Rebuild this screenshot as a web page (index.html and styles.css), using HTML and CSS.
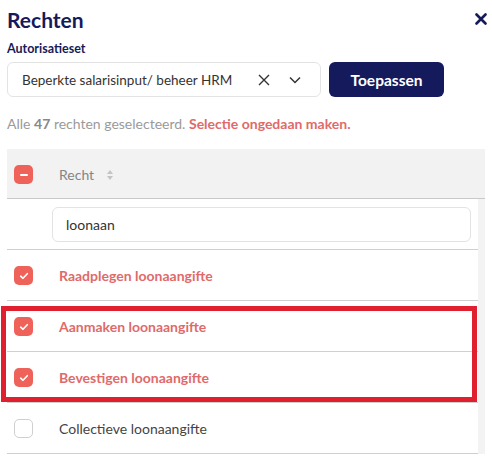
FILE: index.html
```html
<!DOCTYPE html>
<html lang="nl">
<head>
<meta charset="utf-8">
<title>Rechten</title>
<link rel="stylesheet" href="styles.css">
</head>
<body>
<div class="panel">
  <div class="topbar">
    <h1 class="title">Rechten</h1>
    <button class="close" aria-label="Sluiten">
      <svg width="12" height="12" viewBox="0 0 12 12"><path d="M1.5 1.5 L10.5 10.5 M10.5 1.5 L1.5 10.5" stroke="#151a5b" stroke-width="2.6" stroke-linecap="round"/></svg>
    </button>
  </div>
  <div class="label">Autorisatieset</div>
  <div class="selectrow">
    <div class="select">
      <span class="select-value">Beperkte salarisinput/ beheer HRM</span>
      <span class="select-icons">
        <svg width="12" height="12" viewBox="0 0 12 12"><path d="M1 1 L11 11 M11 1 L1 11" stroke="#333" stroke-width="1.4"/></svg>
        <svg width="12" height="12" viewBox="0 0 12 12"><path d="M1 3.5 L6 8.5 L11 3.5" stroke="#333" stroke-width="1.5" fill="none"/></svg>
      </span>
    </div>
    <button class="apply">Toepassen</button>
  </div>
  <p class="info">Alle <b class="count">47</b> rechten geselecteerd. <a class="undo">Selectie ongedaan maken.</a></p>

  <div class="table">
    <div class="thead">
      <span class="cb cb-on">
        <svg width="10" height="10" viewBox="0 0 10 10"><path d="M2 5 H8" stroke="#fff" stroke-width="2" stroke-linecap="round"/></svg>
      </span>
      <span class="th">Recht</span>
      <svg class="sort" width="8" height="12" viewBox="0 0 8 12"><path d="M4 1 L7 5 H1 Z M4 11 L7 7 H1 Z" fill="#c4c4c4"/></svg>
    </div>
    <div class="body">
      <div class="row filter">
        <input class="search" type="text" value="loonaan">
      </div>
      <div class="row">
        <span class="cb cb-on"><svg width="12" height="12" viewBox="0 0 12 12"><path d="M2.7 6.2 L5 8.3 L9.3 3.7" stroke="#fff" stroke-width="1.6" fill="none" stroke-linecap="round" stroke-linejoin="round"/></svg></span>
        <span class="name sel">Raadplegen loonaangifte</span>
      </div>
      <div class="row">
        <span class="cb cb-on"><svg width="12" height="12" viewBox="0 0 12 12"><path d="M2.7 6.2 L5 8.3 L9.3 3.7" stroke="#fff" stroke-width="1.6" fill="none" stroke-linecap="round" stroke-linejoin="round"/></svg></span>
        <span class="name sel">Aanmaken loonaangifte</span>
      </div>
      <div class="row">
        <span class="cb cb-on"><svg width="12" height="12" viewBox="0 0 12 12"><path d="M2.7 6.2 L5 8.3 L9.3 3.7" stroke="#fff" stroke-width="1.6" fill="none" stroke-linecap="round" stroke-linejoin="round"/></svg></span>
        <span class="name sel">Bevestigen loonaangifte</span>
      </div>
      <div class="row">
        <span class="cb cb-off"></span>
        <span class="name">Collectieve loonaangifte</span>
      </div>
    </div>
  </div>
  <div class="highlight"></div>
</div>
</body>
</html>
```
FILE: styles.css
```css
* { box-sizing: border-box; }
html, body { margin: 0; padding: 0; background: #fff; }
body {
  font-family: Lato, "Open Sans", "Liberation Sans", sans-serif;
  color: #333;
  width: 492px;
  height: 460px;
  overflow: hidden;
}
.panel {
  position: relative;
  padding: 0 7px;
}
.topbar {
  display: flex;
  justify-content: space-between;
  align-items: center;
  height: 38px;
}
.title {
  margin: 0;
  font-size: 21px;
  font-weight: 700;
  color: #151a5b;
}
.close {
  border: 0;
  background: none;
  padding: 0;
  margin-right: -2px;
  display: flex;
}
.label {
  font-size: 12.5px;
  font-weight: 700;
  color: #151a5b;
  margin-top: 3px;
  height: 21px;
}
.selectrow {
  display: flex;
  gap: 8px;
  height: 35px;
}
.select {
  width: 314px;
  border: 1px solid #e3e3e3;
  border-radius: 6px;
  display: flex;
  align-items: center;
  justify-content: space-between;
  padding: 0 19px 0 14px;
  font-size: 13.5px;
  color: #333;
}
.select-icons {
  display: flex;
  gap: 19px;
  align-items: center;
}
.apply {
  width: 115px;
  border: 0;
  border-radius: 6px;
  background: #141a5c;
  color: #fff;
  font-family: inherit;
  font-size: 15.5px;
  font-weight: 700;
}
.info {
  margin: 18px 0 0;
  height: 34px;
  font-size: 14px;
  color: #9a9a9a;
}
.count { color: #888; font-weight: 700; }
.undo { color: #e06a6a; font-weight: 700; }
.table {
  width: 478px;
}
.thead {
  background: #f2f2f2;
  height: 50px;
  border-bottom: 1px solid #c9c9c9;
  display: flex;
  align-items: center;
  padding-left: 7px;
  padding-top: 2px;
}
.body {
  border-right: 7px solid #f3f3f3;
}
.th {
  margin-left: 26px;
  font-size: 14px;
  color: #858585;
}
.sort { margin-left: 12px; }
.row {
  height: 51px;
  border-bottom: 1px solid #cfcfcf;
  display: flex;
  align-items: center;
  padding-left: 7px;
  padding-top: 1px;
  width: 471px;
}
.filter { padding-left: 45px; padding-top: 0; }
.search {
  width: 419px;
  height: 35px;
  border: 1px solid #e3e3e3;
  border-radius: 6px;
  padding: 0 13px;
  font-family: inherit;
  font-size: 14px;
  color: #333;
}
.cb {
  width: 19px;
  height: 19px;
  border-radius: 5px;
  display: flex;
  align-items: center;
  justify-content: center;
  flex: none;
}
.cb-on { background: #ee6259; }
.cb-off { border: 1px solid #cfcfcf; background: #fff; }
.name {
  margin-left: 26px;
  font-size: 14px;
  color: #444;
}
.name.sel { color: #e06a6a; font-weight: 700; }
.highlight {
  position: absolute;
  left: 1px;
  top: 306px;
  width: 476px;
  height: 96px;
  border: 5px solid #e0202e;
  pointer-events: none;
}
```
